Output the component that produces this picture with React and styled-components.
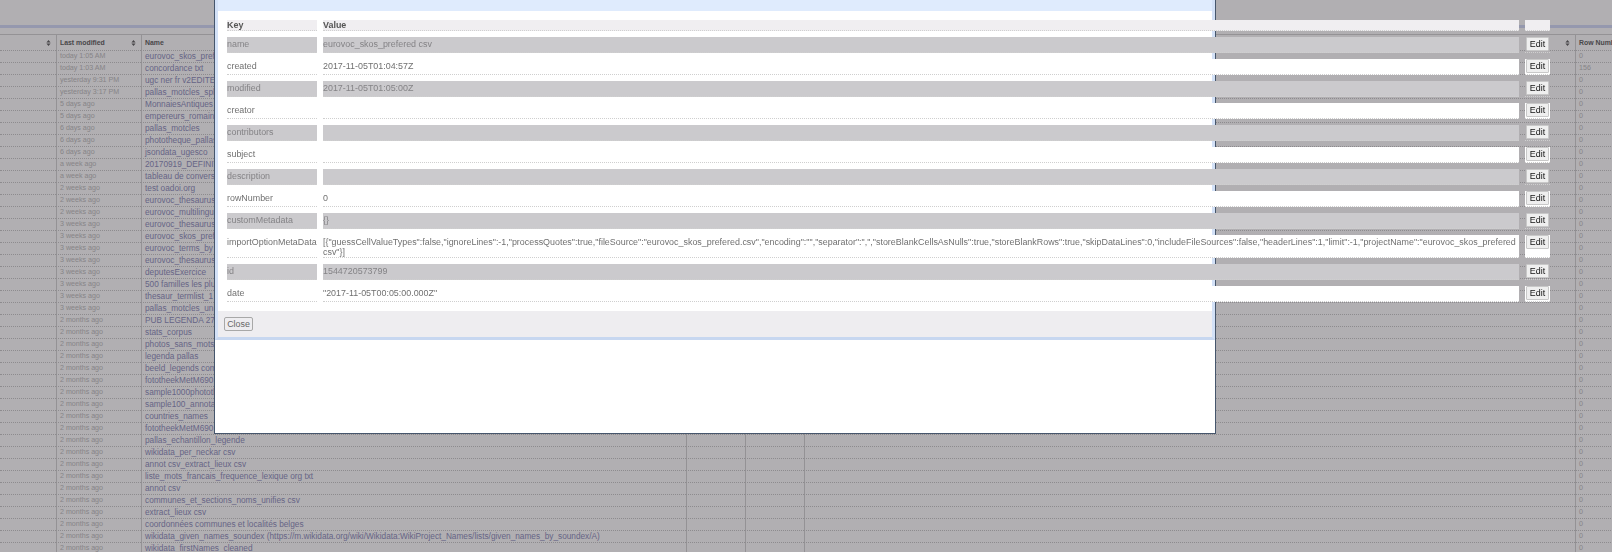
import React from "react";
import styled, { createGlobalStyle } from "styled-components";

const GlobalStyle = createGlobalStyle`
  html, body {
    margin: 0;
    height: 100%;
    overflow: hidden;
    background: #fff;
    font-family: "Liberation Sans", Arial, sans-serif;
  }
`;

const projects = [
  ["today 1:05 AM", "eurovoc_skos_prefered csv", "0"],
  ["today 1:03 AM", "concordance txt", "156"],
  ["yesterday 9:31 PM", "ugc ner fr v2EDITED", "0"],
  ["yesterday 3:17 PM", "pallas_motcles_split", "0"],
  ["5 days ago", "MonnaiesAntiques", "0"],
  ["5 days ago", "empereurs_romains", "0"],
  ["6 days ago", "pallas_motcles", "0"],
  ["6 days ago", "phototheque_pallas", "0"],
  ["6 days ago", "jsondata_ugesco", "0"],
  ["a week ago", "20170919_DEFINITIF", "0"],
  ["a week ago", "tableau de conversion", "0"],
  ["2 weeks ago", "test oadoi.org", "0"],
  ["2 weeks ago", "eurovoc_thesaurus", "0"],
  ["2 weeks ago", "eurovoc_multilingual", "0"],
  ["3 weeks ago", "eurovoc_thesaurus", "0"],
  ["3 weeks ago", "eurovoc_skos_prefered", "0"],
  ["3 weeks ago", "eurovoc_terms_by", "0"],
  ["3 weeks ago", "eurovoc_thesaurus", "0"],
  ["3 weeks ago", "deputesExercice", "0"],
  ["3 weeks ago", "500 familles les plus", "0"],
  ["3 weeks ago", "thesaur_termlist_1", "0"],
  ["3 weeks ago", "pallas_motcles_unique", "0"],
  ["2 months ago", "PUB LEGENDA 27", "0"],
  ["2 months ago", "stats_corpus", "0"],
  ["2 months ago", "photos_sans_mots", "0"],
  ["2 months ago", "legenda pallas", "0"],
  ["2 months ago", "beeld_legends com", "0"],
  ["2 months ago", "fototheekMetM690", "0"],
  ["2 months ago", "sample1000phototheque", "0"],
  ["2 months ago", "sample100_annotations", "0"],
  ["2 months ago", "countries_names", "0"],
  ["2 months ago", "fototheekMetM690", "0"],
  ["2 months ago", "pallas_echantillon_legende", "0"],
  ["2 months ago", "wikidata_per_neckar csv", "0"],
  ["2 months ago", "annot csv_extract_lieux csv", "0"],
  ["2 months ago", "liste_mots_francais_frequence_lexique org txt", "0"],
  ["2 months ago", "annot csv", "0"],
  ["2 months ago", "communes_et_sections_noms_unifies csv", "0"],
  ["2 months ago", "extract_lieux csv", "0"],
  ["2 months ago", "coordonnées communes et localités belges", "0"],
  ["2 months ago", "wikidata_given_names_soundex (https://m.wikidata.org/wiki/Wikidata:WikiProject_Names/lists/given_names_by_soundex/A)", "0"],
  ["2 months ago", "wikidata_firstNames_cleaned", "0"],
];

const metadata = [
  ["name", "eurovoc_skos_prefered csv"],
  ["created", "2017-11-05T01:04:57Z"],
  ["modified", "2017-11-05T01:05:00Z"],
  ["creator", ""],
  ["contributors", ""],
  ["subject", ""],
  ["description", ""],
  ["rowNumber", "0"],
  ["customMetadata", "{}"],
  [
    "importOptionMetaData",
    '[{"guessCellValueTypes":false,"ignoreLines":-1,"processQuotes":true,"fileSource":"eurovoc_skos_prefered.csv","encoding":"","separator":",","storeBlankCellsAsNulls":true,"storeBlankRows":true,"skipDataLines":0,"includeFileSources":false,"headerLines":1,"limit":-1,"projectName":"eurovoc_skos_prefered csv"}]',
  ],
  ["id", "1544720573799"],
  ["date", '"2017-11-05T00:05:00.000Z"'],
];

const columns = [56, 85, 545, 59, 59, 771, 100];

const SortIcon = () => (
  <SortSvg viewBox="0 0 6 7" aria-hidden="true">
    <path d="M3 0 L5.5 3 L0.5 3 Z M3 7 L0.5 4 L5.5 4 Z" fill="currentColor" />
  </SortSvg>
);

export default function App() {
  return (
    <>
      <GlobalStyle />
      <Page>
        <TopBand />
        <BlueBar />
        <ProjectTable>
          <colgroup>
            {columns.map((width, i) => (
              <col key={i} width={width} />
            ))}
          </colgroup>
          <thead>
            <tr>
              <HeadCell $first><HeadInner><SortIcon /></HeadInner></HeadCell>
              <HeadCell><HeadInner>Last modified<SortIcon /></HeadInner></HeadCell>
              <HeadCell><HeadInner>Name</HeadInner></HeadCell>
              <HeadCell />
              <HeadCell />
              <HeadCell><HeadInner><SortIcon /></HeadInner></HeadCell>
              <HeadCell><HeadInner>Row Number</HeadInner></HeadCell>
            </tr>
          </thead>
          <tbody>
            {projects.map(([when, name, rows], i) => (
              <tr key={i}>
                <BodyCell $first />
                <BodyCell>{when}</BodyCell>
                <BodyCell $link>{name}</BodyCell>
                <BodyCell />
                <BodyCell />
                <BodyCell />
                <BodyCell>{rows}</BodyCell>
              </tr>
            ))}
          </tbody>
        </ProjectTable>
      </Page>
      <Overlay />
      <Dialog>
        <Pane>
          <PaneHeader />
          <PaneBody>
            <MetaTable>
              <colgroup>
                <col width={90} />
                <col width={1196} />
                <col width={25} />
              </colgroup>
              <thead>
                <tr>
                  <MetaHead>Key</MetaHead>
                  <MetaHead>Value</MetaHead>
                  <MetaHead />
                </tr>
              </thead>
              <tbody>
                {metadata.map(([key, value], i) => (
                  <tr key={key}>
                    <MetaCell $odd={i % 2 === 0}>{key}</MetaCell>
                    <MetaCell $odd={i % 2 === 0}>{value}</MetaCell>
                    <ActionCell $odd={i % 2 === 0}>
                      <EditButton>Edit</EditButton>
                    </ActionCell>
                  </tr>
                ))}
              </tbody>
            </MetaTable>
          </PaneBody>
          <PaneFooter>
            <CloseButton>Close</CloseButton>
          </PaneFooter>
        </Pane>
      </Dialog>
    </>
  );
}

const Page = styled.div`
  width: 1612px;
  height: 552px;
  overflow: hidden;
  background: #fff;
`;

const TopBand = styled.div`
  height: 25px;
`;

const BlueBar = styled.div`
  height: 3px;
  background: #d6ddfa;
  margin-bottom: 6px;
`;

const ProjectTable = styled.table`
  width: 1675px;
  table-layout: fixed;
  border-collapse: separate;
  border-spacing: 0;
  font-size: 6.9px;
`;

const HeadCell = styled.th`
  box-sizing: border-box;
  height: 17px;
  padding: 0 3px;
  border-top: 1px solid #d4d4d4;
  border-bottom: 1px dotted #cacaca;
  border-left: ${(p) => (p.$first ? "none" : "1px solid #d4d4d4")};
  color: #666;
  font-weight: bold;
  text-align: left;
  white-space: nowrap;
  overflow: hidden;
`;

const HeadInner = styled.div`
  display: flex;
  align-items: center;
  justify-content: space-between;
`;

const SortSvg = styled.svg`
  width: 5px;
  height: 6px;
  margin-left: auto;
  margin-right: 2px;
  color: #666;
  flex: none;
`;

const BodyCell = styled.td`
  box-sizing: border-box;
  height: 12px;
  padding: 0 3px;
  border-bottom: 1px dotted #cacaca;
  border-left: ${(p) => (p.$first ? "none" : "1px solid #d4d4d4")};
  color: ${(p) => (p.$link ? "#9292be" : "#c2c2c2")};
  font-size: ${(p) => (p.$link ? "8.28px" : "7.1px")};
  line-height: 11px;
  white-space: nowrap;
  overflow: ${(p) => (p.$link ? "visible" : "hidden")};
`;

const Overlay = styled.div`
  position: fixed;
  inset: 0;
  background: rgba(11, 5, 14, 0.32);
`;

const Dialog = styled.div`
  position: absolute;
  left: 214px;
  top: 0;
  box-sizing: border-box;
  width: 1002px;
  height: 434px;
  background: #fff;
  border: 1px solid #46566c;
  border-top: none;
`;

const Pane = styled.div`
  border: 3px solid #d3e1f7;
  border-top: none;
  border-bottom-color: #c7d7f0;
`;

const PaneHeader = styled.div`
  height: 11px;
  background: #dfebfd;
`;

const PaneBody = styled.div`
  padding: 3px;
`;

const PaneFooter = styled.div`
  display: flex;
  align-items: center;
  height: 26px;
  padding: 0 6px;
  background: #eeedf0;
`;

const MetaTable = styled.table`
  position: relative;
  width: 1335px;
  table-layout: fixed;
  border-collapse: separate;
  border-spacing: 6px;
  font-size: 8.92px;
  line-height: 10px;
`;

const MetaHead = styled.th`
  box-sizing: border-box;
  height: 11px;
  padding: 0;
  background: #f0eef1;
  border-bottom: 1px dotted #d0d0d0;
  color: #555;
  font-weight: bold;
  text-align: left;
`;

const MetaCell = styled.td`
  box-sizing: border-box;
  height: 16px;
  padding: 2px 0 0;
  vertical-align: top;
  background: ${(p) => (p.$odd ? "#cbcacd" : "#fff")};
  border-bottom: 1px dotted #cfcfcf;
  color: ${(p) => (p.$odd ? "#848386" : "#707070")};
  word-break: normal;
`;

const ActionCell = styled.td`
  box-sizing: border-box;
  padding: 0 0 0 1px;
  vertical-align: top;
  background: ${(p) => (p.$odd ? "transparent" : "#fff")};
  border-bottom: 1px dotted #cfcfcf;
`;

const EditButton = styled.button`
  display: block;
  box-sizing: border-box;
  width: 23px;
  height: 14px;
  padding: 0;
  background: #efefef;
  border: 1px solid #c8c8c8;
  border-radius: 1px;
  color: #111;
  font: 8.9px "Liberation Sans", Arial, sans-serif;
`;

const CloseButton = styled.button`
  box-sizing: border-box;
  width: 29px;
  height: 14px;
  padding: 0;
  background: #eeedf0;
  border: 1px solid #a8a8a8;
  border-radius: 2px;
  color: #666;
  font: 8.9px "Liberation Sans", Arial, sans-serif;
`;
